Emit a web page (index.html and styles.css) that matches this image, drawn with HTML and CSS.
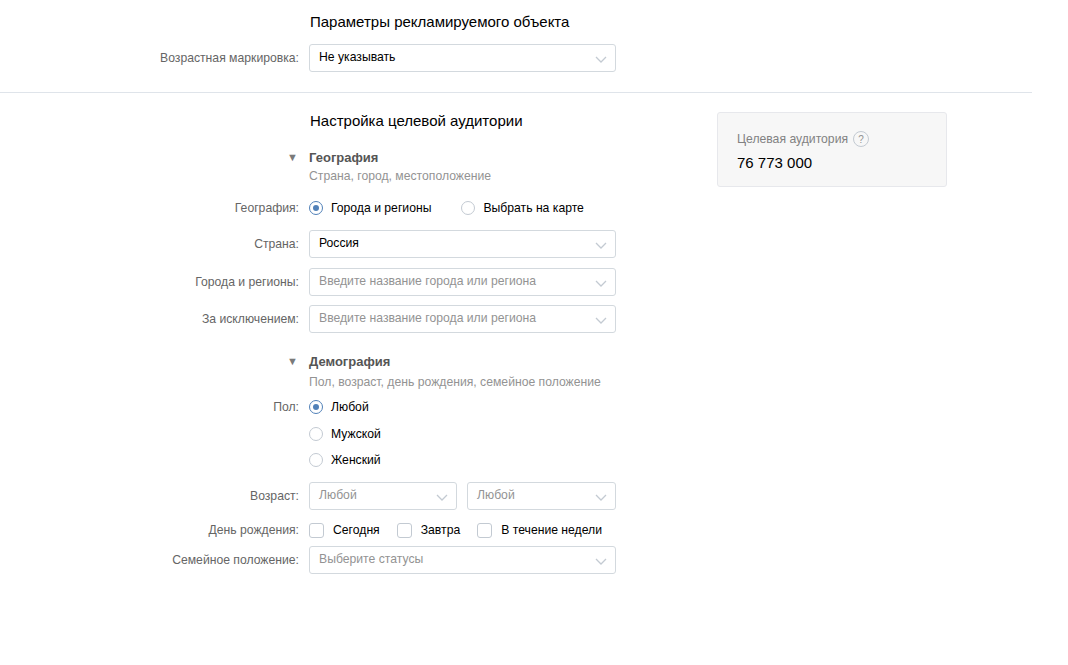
FILE: index.html
```html
<!DOCTYPE html>
<html lang="ru">
<head>
  <meta charset="UTF-8">
  <title>Настройка объявления</title>
  <link rel="stylesheet" href="styles.css">
</head>
<body>
  <div class="section section-object">
    <div class="row row-title">
      <div class="label"></div>
      <div class="section-title">Параметры рекламируемого объекта</div>
    </div>
    <div class="row row-select first-field">
      <div class="label">Возрастная маркировка:</div>
      <div class="select"><span class="value">Не указывать</span><svg class="chevron" width="12" height="7" viewBox="0 0 12 7"><path d="M1 1l5 5 5-5" fill="none" stroke="#c3cad2" stroke-width="1.3"/></svg></div>
    </div>
  </div>

  <div class="section section-audience">
    <div class="form">
      <div class="row row-title">
        <div class="label"></div>
        <div class="section-title">Настройка целевой аудитории</div>
      </div>

      <!-- География -->
      <div class="group-head">
        <div class="row">
          <div class="label"><span class="toggle">&#9660;</span></div>
          <div class="group-name">География</div>
        </div>
        <div class="row hint-row">
          <div class="label"></div>
          <div class="group-hint">Страна, город, местоположение</div>
        </div>
      </div>
      <div class="row row-check geo-type">
        <div class="label">География:</div>
        <div class="options">
          <label class="radio checked"><span class="mark"></span>Города и регионы</label>
          <label class="radio"><span class="mark"></span>Выбрать на карте</label>
        </div>
      </div>
      <div class="row row-select">
        <div class="label">Страна:</div>
        <div class="select"><span class="value">Россия</span><svg class="chevron" width="12" height="7" viewBox="0 0 12 7"><path d="M1 1l5 5 5-5" fill="none" stroke="#c3cad2" stroke-width="1.3"/></svg></div>
      </div>
      <div class="row row-select">
        <div class="label">Города и регионы:</div>
        <div class="select"><span class="value placeholder">Введите название города или региона</span><svg class="chevron" width="12" height="7" viewBox="0 0 12 7"><path d="M1 1l5 5 5-5" fill="none" stroke="#c3cad2" stroke-width="1.3"/></svg></div>
      </div>
      <div class="row row-select except">
        <div class="label">За исключением:</div>
        <div class="select"><span class="value placeholder">Введите название города или региона</span><svg class="chevron" width="12" height="7" viewBox="0 0 12 7"><path d="M1 1l5 5 5-5" fill="none" stroke="#c3cad2" stroke-width="1.3"/></svg></div>
      </div>

      <!-- Демография -->
      <div class="group-head demography">
        <div class="row">
          <div class="label"><span class="toggle">&#9660;</span></div>
          <div class="group-name">Демография</div>
        </div>
        <div class="row hint-row">
          <div class="label"></div>
          <div class="group-hint">Пол, возраст, день рождения, семейное положение</div>
        </div>
      </div>
      <div class="row row-check sex">
        <div class="label">Пол:</div>
        <label class="radio checked"><span class="mark"></span>Любой</label>
      </div>
      <div class="row row-check sex-more">
        <div class="label"></div>
        <label class="radio"><span class="mark"></span>Мужской</label>
      </div>
      <div class="row row-check sex-more">
        <div class="label"></div>
        <label class="radio"><span class="mark"></span>Женский</label>
      </div>
      <div class="row row-select age">
        <div class="label">Возраст:</div>
        <div class="pair">
          <div class="select"><span class="value placeholder">Любой</span><svg class="chevron" width="12" height="7" viewBox="0 0 12 7"><path d="M1 1l5 5 5-5" fill="none" stroke="#c3cad2" stroke-width="1.3"/></svg></div>
          <div class="select"><span class="value placeholder">Любой</span><svg class="chevron" width="12" height="7" viewBox="0 0 12 7"><path d="M1 1l5 5 5-5" fill="none" stroke="#c3cad2" stroke-width="1.3"/></svg></div>
        </div>
      </div>
      <div class="row row-check birthday">
        <div class="label">День рождения:</div>
        <div class="options">
          <label class="checkbox"><span class="mark"></span>Сегодня</label>
          <label class="checkbox"><span class="mark"></span>Завтра</label>
          <label class="checkbox"><span class="mark"></span>В течение недели</label>
        </div>
      </div>
      <div class="row row-select status">
        <div class="label">Семейное положение:</div>
        <div class="select"><span class="value placeholder">Выберите статусы</span><svg class="chevron" width="12" height="7" viewBox="0 0 12 7"><path d="M1 1l5 5 5-5" fill="none" stroke="#c3cad2" stroke-width="1.3"/></svg></div>
      </div>
    </div>

    <div class="audience-card">
      <div class="audience-label">Целевая аудитория <span class="help">?</span></div>
      <div class="audience-count">76 773 000</div>
    </div>
  </div>
</body>
</html>
```

FILE: styles.css
```css
body {
  margin: 0;
  background-color: #fff;
  font-family: 'Liberation Sans', Arial, sans-serif;
  font-size: 12.2px;
  color: #000;
}
.section-object {
  width: 1032px;
  padding: 11px 0 20px;
  border-bottom: 1px solid #dfe4ea;
}
.section-audience {
  display: flex;
  align-items: flex-start;
  padding-top: 17px;
}
.form {
  width: 616px;
}
.row {
  display: flex;
  align-items: center;
  white-space: nowrap;
}
.label {
  width: 299px;
  flex: none;
  text-align: right;
  color: #656565;
  margin-right: 10px;
}
.row-title {
  height: 20px;
}
.section-title {
  font-size: 15px;
  color: #000;
  margin-left: 1px;
}
.row-select {
  margin-top: 10px;
}
.first-field {
  margin-top: 13px;
}
.select {
  width: 307px;
  height: 28px;
  box-sizing: border-box;
  border: 1px solid #d3d9de;
  border-radius: 3px;
  display: flex;
  align-items: center;
  justify-content: space-between;
  padding: 0 8px 0 9px;
  background-color: #fff;
}
.select .value {
  margin-top: -2px;
}
.select .placeholder {
  color: #939393;
}
.chevron {
  margin-top: 2px;
}
.group-head {
  margin-top: 18px;
}
.group-head .row {
  height: 18px;
}
.group-head .hint-row {
  margin-top: 1px;
}
.toggle {
  font-size: 11px;
  color: #7a7a7a;
  margin-right: 1px;
}
.group-name {
  font-weight: bold;
  font-size: 13px;
  color: #555;
}
.group-hint {
  color: #939393;
}
.row-check {
  height: 20px;
}
.geo-type {
  margin-top: 13px;
}
.geo-type + .row-select {
  margin-top: 12px;
}
.except {
  margin-top: 9px;
}
.options {
  display: flex;
  align-items: center;
}
.radio,
.checkbox {
  display: flex;
  align-items: center;
  color: #000;
}
.radio .mark {
  width: 12px;
  height: 12px;
  border: 1px solid #c3cad2;
  border-radius: 50%;
  margin-right: 8px;
  position: relative;
}
.radio.checked .mark {
  border-color: #5181b8;
}
.radio.checked .mark::after {
  content: '';
  position: absolute;
  left: 3px;
  top: 3px;
  width: 6px;
  height: 6px;
  border-radius: 50%;
  background-color: #5181b8;
}
.geo-type .radio:first-child {
  margin-right: 30px;
}
.checkbox .mark {
  width: 13px;
  height: 13px;
  border: 1px solid #c3cad2;
  border-radius: 3px;
  margin-right: 9px;
}
.birthday .checkbox {
  margin-right: 17px;
}
.demography {
  margin-top: 19px;
}
.demography .hint-row {
  margin-top: 3px;
}
.sex {
  margin-top: 6px;
}
.sex-more {
  margin-top: 7px;
}
.sex-more + .sex-more {
  margin-top: 6px;
}
.pair {
  display: flex;
  gap: 10px;
}
.pair .select {
  width: 148px;
}
.pair .select + .select {
  width: 149px;
}
.age {
  margin-top: 12px;
}
.birthday {
  margin-top: 10px;
}
.status {
  margin-top: 6px;
}
.audience-card {
  width: 230px;
  height: 75px;
  box-sizing: border-box;
  margin-left: 101px;
  margin-top: 2px;
  padding: 18px 19px 0;
  background-color: #f7f7f7;
  border: 1px solid #e7e8ec;
  border-radius: 3px;
}
.audience-label {
  color: #828282;
  display: flex;
  align-items: center;
}
.help {
  width: 14px;
  height: 14px;
  margin-left: 5px;
  border: 1px solid #c3cad2;
  border-radius: 50%;
  font-size: 10px;
  color: #939393;
  display: flex;
  align-items: center;
  justify-content: center;
}
.audience-count {
  font-size: 15px;
  margin-top: 7px;
}
```
